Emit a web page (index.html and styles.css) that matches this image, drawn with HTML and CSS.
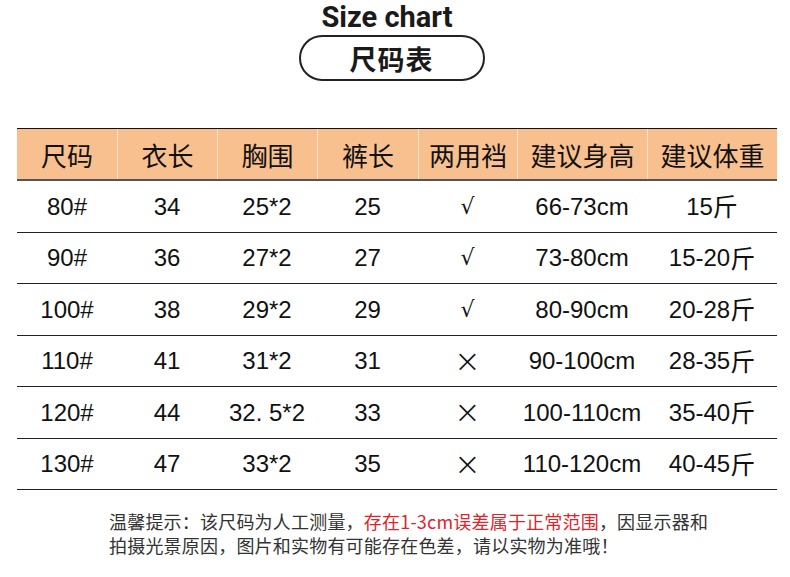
FILE: index.html
```html
<!DOCTYPE html>
<html lang="zh-CN">
<head>
<meta charset="utf-8">
<title>Size chart</title>
<link rel="stylesheet" href="styles.css">
</head>
<body>
<div class="page">
  <header class="heading">
    <div class="title-en">Size chart</div>
    <div class="title-pill">尺码表</div>
  </header>

  <div class="chart">
    <div class="row head">
      <div class="cell">尺码</div>
      <div class="cell">衣长</div>
      <div class="cell">胸围</div>
      <div class="cell">裤长</div>
      <div class="cell">两用裆</div>
      <div class="cell">建议身高</div>
      <div class="cell">建议体重</div>
    </div>
    <div class="row">
      <div class="cell">80#</div><div class="cell">34</div><div class="cell">25*2</div><div class="cell">25</div><div class="cell check">√</div><div class="cell">66-73cm</div><div class="cell">15<span class="jin">斤</span></div>
    </div>
    <div class="row">
      <div class="cell">90#</div><div class="cell">36</div><div class="cell">27*2</div><div class="cell">27</div><div class="cell check">√</div><div class="cell">73-80cm</div><div class="cell">15-20<span class="jin">斤</span></div>
    </div>
    <div class="row">
      <div class="cell">100#</div><div class="cell">38</div><div class="cell">29*2</div><div class="cell">29</div><div class="cell check">√</div><div class="cell">80-90cm</div><div class="cell">20-28<span class="jin">斤</span></div>
    </div>
    <div class="row">
      <div class="cell">110#</div><div class="cell">41</div><div class="cell">31*2</div><div class="cell">31</div><div class="cell cross">×</div><div class="cell">90-100cm</div><div class="cell">28-35<span class="jin">斤</span></div>
    </div>
    <div class="row">
      <div class="cell">120#</div><div class="cell">44</div><div class="cell">32. 5*2</div><div class="cell">33</div><div class="cell cross">×</div><div class="cell">100-110cm</div><div class="cell">35-40<span class="jin">斤</span></div>
    </div>
    <div class="row">
      <div class="cell">130#</div><div class="cell">47</div><div class="cell">33*2</div><div class="cell">35</div><div class="cell cross">×</div><div class="cell">110-120cm</div><div class="cell">40-45<span class="jin">斤</span></div>
    </div>
  </div>

  <p class="note">温馨提示：该尺码为人工测量，<span class="warn">存在1-3cm误差属于正常范围</span>，因显示器和<br>拍摄光景原因，图片和实物有可能存在色差，请以实物为准哦！</p>
</div>
</body>
</html>
```

FILE: styles.css
```css
html, body {
  margin: 0;
  padding: 0;
  background: #ffffff;
}

.page {
  width: 790px;
  height: 577px;
  overflow: hidden;
  font-family: "Liberation Sans", "Noto Sans CJK SC", sans-serif;
  color: #111;
}

.heading {
  display: flex;
  flex-direction: column;
  align-items: center;
  padding-right: 16px;
}

.title-en {
  font-family: Roboto, "Noto Sans", sans-serif;
  font-weight: 700;
  font-size: 29px;
  line-height: 34px;
  letter-spacing: 0;
  color: #1a1a1a;
}

.title-pill {
  margin-top: 1px;
  margin-left: 9px;
  box-sizing: border-box;
  width: 186px;
  height: 46px;
  border: 2px solid #222;
  border-radius: 23px;
  display: flex;
  align-items: center;
  justify-content: center;
  font-family: "Noto Sans CJK SC", sans-serif;
  font-weight: 700;
  font-size: 27px;
  line-height: 1;
  letter-spacing: 1px;
  color: #1a1a1a;
}

.chart {
  margin: 47px 0 0 17px;
  width: 760px;
  border-top: 1.5px solid #111;
}

.row {
  display: grid;
  grid-template-columns: 100px 100px 100px 101px 99px 130px 130px;
  height: 51.5px;
  box-sizing: border-box;
  border-bottom: 1.5px solid #222;
}

.row.head {
  height: 52px;
  background: #f9c08f;
  border-bottom: 2px solid #555;
}

.row.head .cell {
  font-family: "Noto Sans CJK SC", sans-serif;
  font-size: 26px;
  border-left: 1px solid #fbe3cc;
}

.row.head .cell:first-child {
  border-left: none;
}

.cell {
  display: flex;
  align-items: center;
  justify-content: center;
  font-size: 24px;
  line-height: 1;
  white-space: nowrap;
  padding-top: 1px;
}

.jin {
  font-family: "Noto Sans CJK SC", sans-serif;
  font-size: 25px;
  line-height: 1;
  position: relative;
  top: -1px;
}

.cell.check {
  font-family: "DejaVu Sans", sans-serif;
  font-size: 22px;
}

.cell.cross {
  font-family: "DejaVu Sans", sans-serif;
  font-size: 32px;
  font-weight: 300;
  padding-top: 0;
}

.note {
  margin: 19px 0 0 109px;
  font-family: "Noto Sans CJK SC", sans-serif;
  font-size: 18px;
  line-height: 24px;
  letter-spacing: 0.2px;
  color: #333;
}

.warn {
  color: #e0242a;
}
```
